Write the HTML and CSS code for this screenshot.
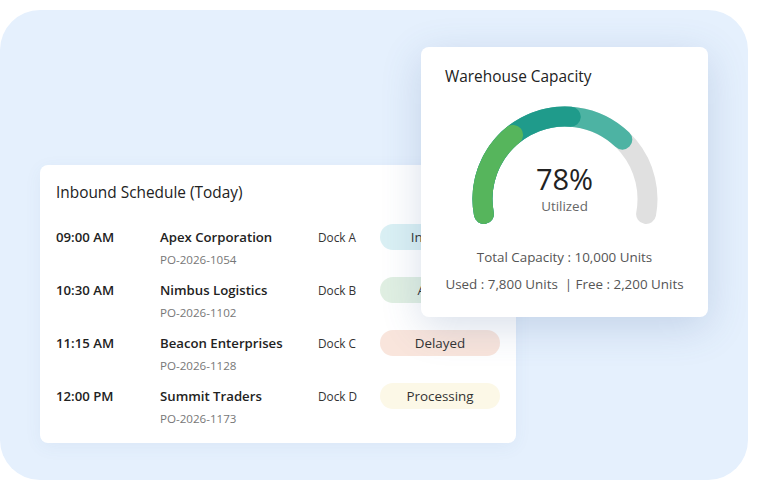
FILE: index.html
```html
<!DOCTYPE html>
<html lang="en">
<head>
    <meta charset="UTF-8">
    <meta name="viewport" content="width=device-width, initial-scale=1.0">
    <title>Warehouse</title>
    <link rel="stylesheet" href="styles.css">
</head>
<body>
    <main class="panel">
        <section class="schedule">
            <h2 class="card-title">Inbound Schedule (Today)</h2>
            <div class="row">
                <span class="time">09:00 AM</span>
                <span class="company">Apex Corporation</span>
                <span class="dock">Dock A</span>
                <span class="pill transit">In Transit</span>
                <span class="po">PO-2026-1054</span>
            </div>
            <div class="row">
                <span class="time">10:30 AM</span>
                <span class="company">Nimbus Logistics</span>
                <span class="dock">Dock B</span>
                <span class="pill arrived">Arrived</span>
                <span class="po">PO-2026-1102</span>
            </div>
            <div class="row">
                <span class="time">11:15 AM</span>
                <span class="company">Beacon Enterprises</span>
                <span class="dock">Dock C</span>
                <span class="pill delayed">Delayed</span>
                <span class="po">PO-2026-1128</span>
            </div>
            <div class="row">
                <span class="time">12:00 PM</span>
                <span class="company">Summit Traders</span>
                <span class="dock">Dock D</span>
                <span class="pill processing">Processing</span>
                <span class="po">PO-2026-1173</span>
            </div>
        </section>

        <section class="capacity">
            <h2 class="card-title">Warehouse Capacity</h2>
            <div class="gauge">
                <svg width="190" height="130" viewBox="0 0 190 130">
                    <g fill="none" stroke-width="20" stroke-linecap="round">
                        <path d="M13.88 110.03 A82.5 82.5 0 1 1 176.12 110.03" stroke="#e0e0e0"/>
                        <path d="M13.88 110.03 A82.5 82.5 0 0 1 152.31 35.66" stroke="#4db3a3"/>
                        <path d="M13.88 110.03 A82.5 82.5 0 0 1 100.76 12.70" stroke="#1f9b8b"/>
                        <path d="M13.88 110.03 A82.5 82.5 0 0 1 43.08 30.89" stroke="#56b55c"/>
                    </g>
                </svg>
                <div class="gauge-label">
                    <span class="percent">78%</span>
                    <span class="utilized">Utilized</span>
                </div>
            </div>
            <p class="stat">Total Capacity : 10,000 Units</p>
            <p class="stat">Used : 7,800 Units &nbsp;| Free : 2,200 Units</p>
        </section>
    </main>
</body>
</html>
```

FILE: styles.css
```css
* {
    padding: 0;
    margin: 0;
    box-sizing: border-box;
}
body {
    background: #fff;
    font-family: "Open Sans", "Noto Sans", sans-serif;
    color: #222;
}
.panel {
    position: relative;
    width: 748px;
    height: 470px;
    margin-top: 10px;
    background: #e5f0fd;
    border-radius: 40px;
    padding: 155px 0 0 40px;
}
.schedule {
    width: 476px;
    height: 278px;
    background: #fff;
    border-radius: 8px;
    padding: 18px 16px 17px 16px;
    box-shadow: 0 4px 18px rgba(70, 100, 150, 0.06);
}
.card-title {
    font-size: 15.4px;
    font-weight: 400;
    line-height: 20px;
    color: #222;
}
.schedule .card-title {
    margin-bottom: 21px;
}
.capacity .card-title {
    margin-top: 1px;
}
.row {
    display: grid;
    grid-template-columns: 104px 158px 62px 120px;
    grid-template-rows: 26px 16px;
    row-gap: 1px;
    align-items: center;
    margin-bottom: 10px;
}
.time,
.company {
    font-size: 13.2px;
    font-weight: 600;
    color: #222;
}
.dock {
    font-size: 11.8px;
    color: #333;
}
.po {
    grid-column: 2 / 3;
    font-size: 11.6px;
    color: #777;
}
.pill {
    height: 26px;
    border-radius: 13px;
    font-size: 13.4px;
    color: #333;
    display: flex;
    align-items: center;
    justify-content: center;
}
.transit { background: #daf0f4; }
.arrived { background: #e0efe2; }
.delayed { background: #f9e5dc; }
.processing { background: #fcf8e7; }

.capacity {
    position: absolute;
    left: 421px;
    top: 37px;
    width: 287px;
    height: 270px;
    background: #fff;
    border-radius: 8px;
    padding: 19px 24px 0 24px;
    box-shadow: 0 10px 40px rgba(60, 95, 150, 0.2);
}
.gauge {
    position: relative;
    width: 190px;
    height: 130px;
    margin: 17px auto 0 auto;
}
.gauge svg {
    display: block;
}
.gauge-label {
    position: absolute;
    left: 0;
    right: 0;
    top: 60px;
    display: flex;
    flex-direction: column;
    align-items: center;
}
.percent {
    font-size: 29px;
    line-height: 30px;
    font-weight: 500;
    color: #222;
}
.utilized {
    margin-top: 4px;
    font-size: 13.4px;
    line-height: 16px;
    color: #666;
}
.stat {
    font-size: 13.4px;
    line-height: 18px;
    color: #555;
    text-align: center;
    white-space: nowrap;
}
.gauge + .stat {
    margin-top: 14px;
}
.stat + .stat {
    margin-top: 9px;
}
```
